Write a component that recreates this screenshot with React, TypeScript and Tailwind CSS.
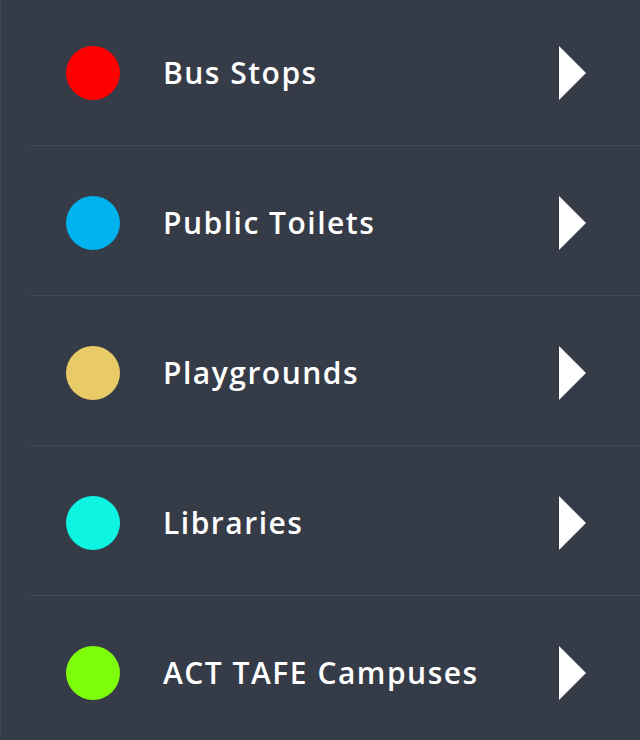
import React from "react";

const items = [
  { label: "Bus Stops", color: "bg-[#ff0000]" },
  { label: "Public Toilets", color: "bg-[#00b2ee]" },
  { label: "Playgrounds", color: "bg-[#e8ca66]" },
  { label: "Libraries", color: "bg-[#0df5e2]" },
  { label: "ACT TAFE Campuses", color: "bg-[#7dfc0c]" },
];

export default function App() {
  return (
    <div className="w-[640px] h-[740px] overflow-hidden bg-[#363c47] border-l border-[#3f4550] flex flex-col gap-[4px]" style={{ fontFamily: '"Open Sans", "Noto Sans", sans-serif' }}>
      {items.map((it) => (
        <div key={it.label} className="ml-[29px] shrink-0 h-[146px] border-b border-[#434955] flex items-center pl-[36px] pr-[54px]">
          <div className={`w-[54px] h-[54px] rounded-full shrink-0 ${it.color}`} />
          <div className="ml-[43px] flex-1 text-white text-[30px] font-semibold tracking-[1.5px] leading-none">{it.label}</div>
          <div className="w-0 h-0 border-y-[27px] border-y-transparent border-l-[27px] border-l-white" />
        </div>
      ))}
    </div>
  );
}
